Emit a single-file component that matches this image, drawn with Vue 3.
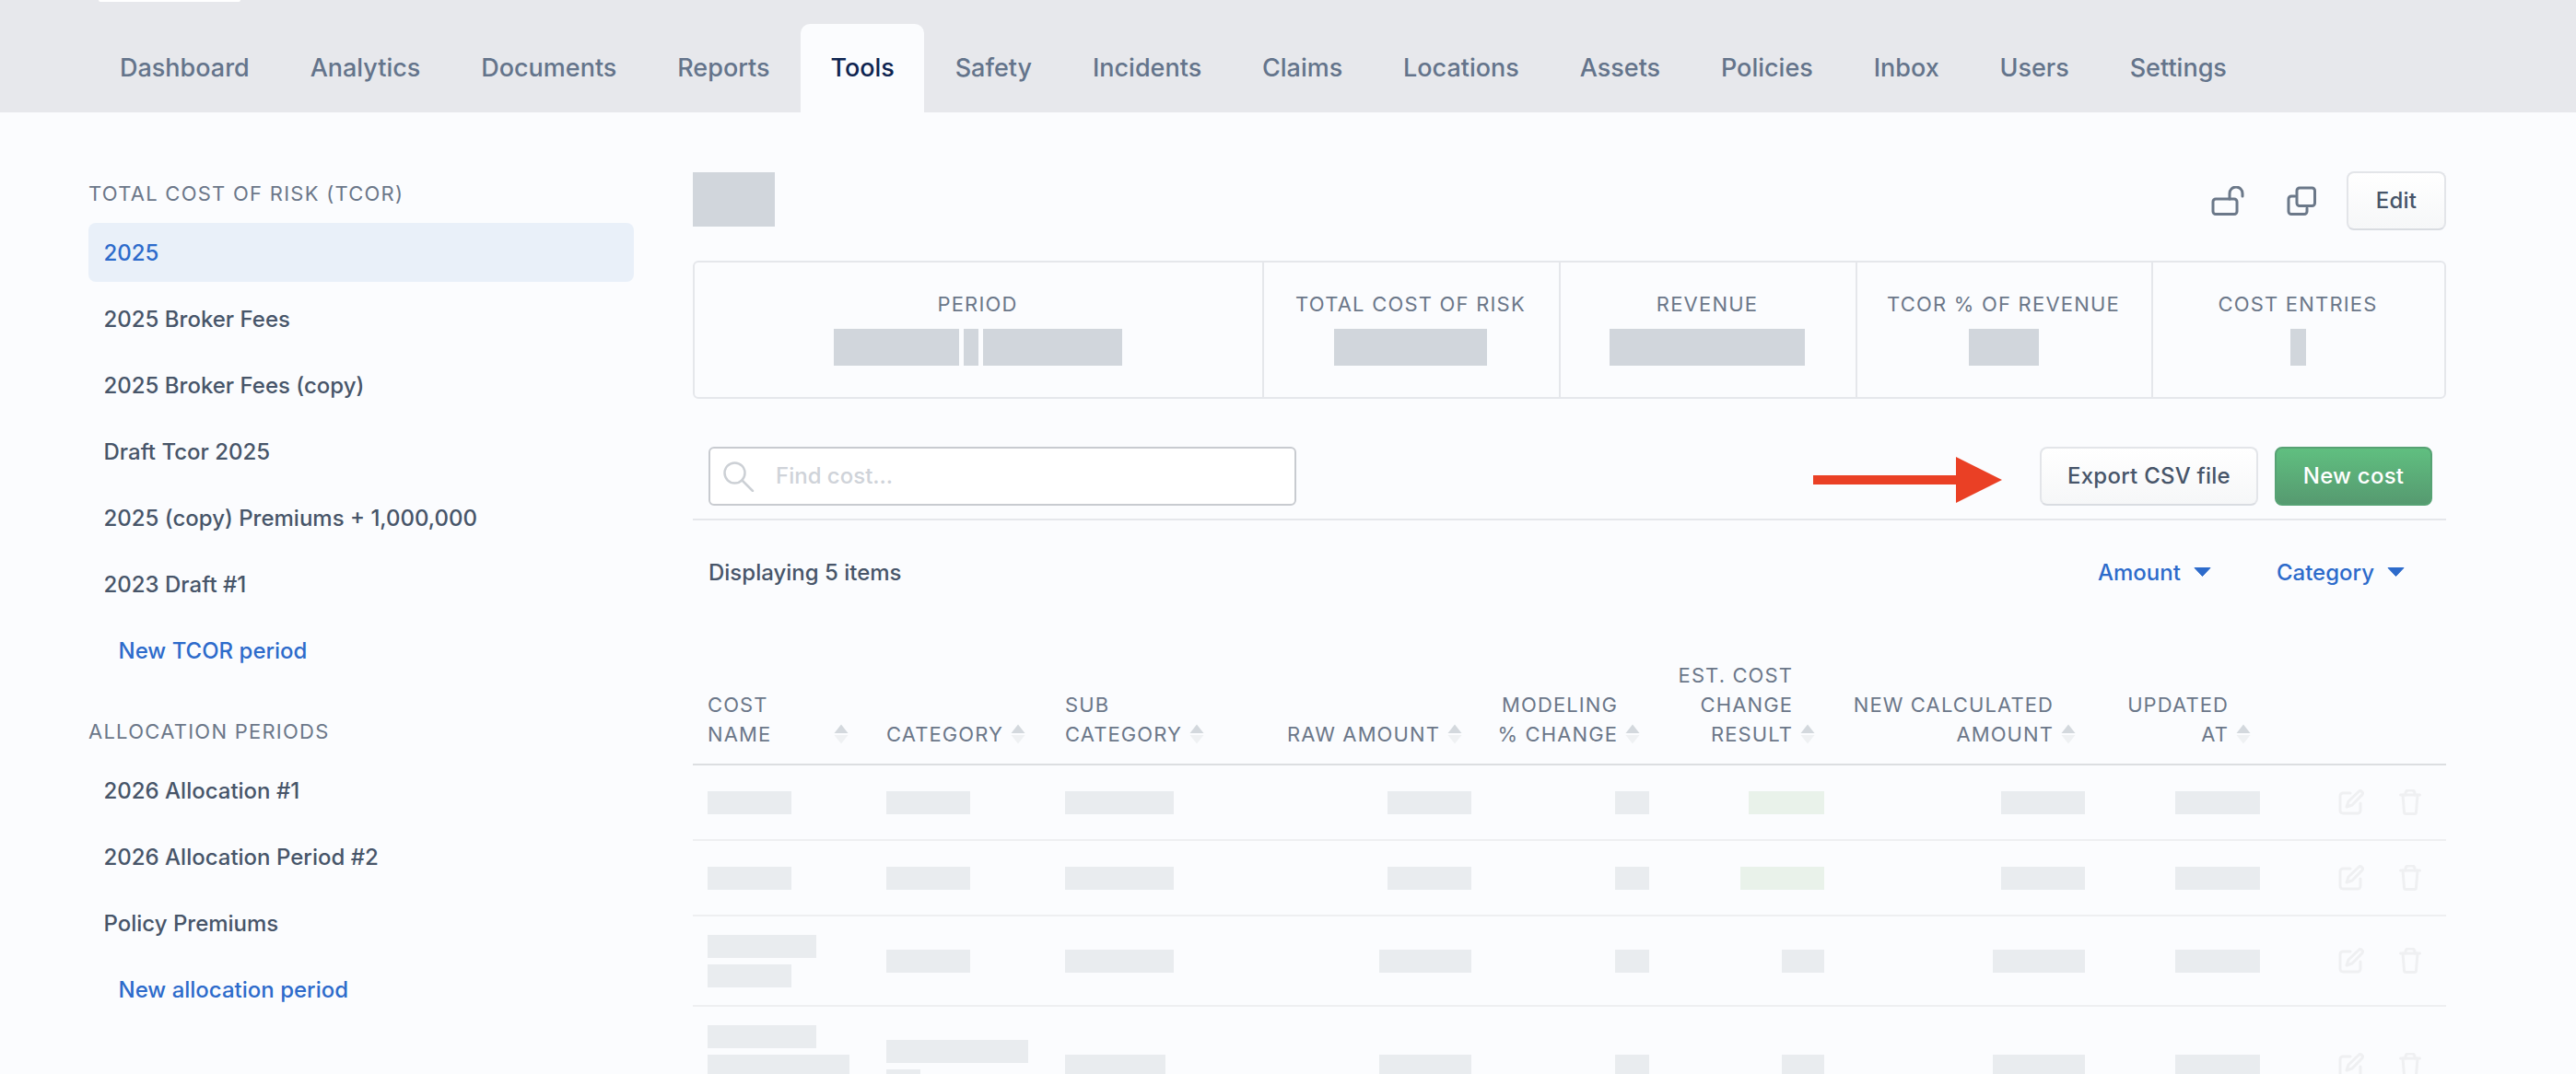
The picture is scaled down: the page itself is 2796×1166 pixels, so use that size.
<template>
  <div class="page">
    <header class="topbar">
      <div class="logo-stub"></div>
      <nav class="tabs">
        <a v-for="tab in tabs" :key="tab" class="tab" :class="{ active: tab === 'Tools' }">{{ tab }}</a>
      </nav>
    </header>

    <div class="content">
      <aside class="sidebar">
        <section v-for="group in groups" :key="group.title" class="side-group">
          <h3 class="side-title">{{ group.title }}</h3>
          <ul class="side-list">
            <li v-for="item in group.items" :key="item" class="side-item" :class="{ current: item === '2025' }">{{ item }}</li>
            <li class="side-item side-new">{{ group.action }}</li>
          </ul>
        </section>
      </aside>

      <main class="main">
        <div class="title-row">
          <span class="title-mask"></span>
          <div class="title-actions">
            <svg class="icon-lock" width="36" height="32" viewBox="0 0 36 32" fill="none" stroke="#6b7889" stroke-width="3">
              <rect x="2" y="14" width="26" height="16.5" rx="3" />
              <path d="M20 14V8a7 7 0 0 1 14 0v3" stroke-linecap="round" />
            </svg>
            <svg class="icon-copy" width="32" height="32" viewBox="0 0 32 32" fill="none" stroke="#6b7889" stroke-width="3">
              <rect x="11" y="2" width="19.5" height="19.5" rx="3" />
              <path d="M9 11H5a3 3 0 0 0-3 3v13.5a3 3 0 0 0 3 3h14a3 3 0 0 0 3-3V24" stroke-linecap="round" />
            </svg>
            <button class="btn btn-edit">Edit</button>
          </div>
        </div>

        <div class="summary">
          <div v-for="stat in stats" :key="stat.label" class="stat">
            <div class="stat-label">{{ stat.label }}</div>
            <div class="stat-value">
              <span v-for="(w, i) in stat.masks" :key="i" class="stat-mask" :style="{ width: w + 'px' }"></span>
            </div>
          </div>
        </div>

        <div class="toolbar">
          <div class="search">
            <svg width="34" height="33" viewBox="0 0 34 33" fill="none" stroke="#ccd0d5" stroke-width="2.5">
              <circle cx="12.5" cy="12.5" r="11" />
              <path d="M20.5 20.5L32 32" stroke-linecap="round" />
            </svg>
            <span class="search-ph">Find cost...</span>
          </div>
          <svg class="arrow" width="205" height="50" viewBox="0 0 205 50">
            <path d="M0 20H155V0L205 25L155 50V30H0z" fill="#ea4025" />
          </svg>
          <button class="btn btn-export">Export CSV file</button>
          <button class="btn btn-new">New cost</button>
        </div>

        <div class="filters">
          <span class="count">Displaying 5 items</span>
          <div class="filter-links">
            <a v-for="f in ['Amount', 'Category']" :key="f" class="filter">
              {{ f }}
              <svg width="19" height="10" viewBox="0 0 19 10"><path d="M1 0.5H18L9.5 9.5z" fill="#2d6bcb" stroke="#2d6bcb" stroke-linejoin="round" /></svg>
            </a>
          </div>
        </div>

        <table class="costs">
          <colgroup>
            <col v-for="w in colWidths" :key="w.id" :style="{ width: w.px + 'px' }" />
          </colgroup>
          <thead>
            <tr>
              <th v-for="col in columns" :key="col.id" :class="{ right: col.right }">
                <div class="th-inner">
                  <div class="th-text" :class="{ wide: col.id === 'name' }">
                    <div v-for="line in col.lines" :key="line">{{ line }}</div>
                  </div>
                  <svg class="sort" width="16" height="22" viewBox="0 0 16 22">
                    <path d="M8 0.5L15.5 10H0.5z" fill="#d3d8dd" />
                    <path d="M0.5 12H15.5L8 21.5z" fill="#eff1f3" />
                  </svg>
                </div>
              </th>
              <th></th>
            </tr>
          </thead>
          <tbody>
            <tr v-for="(row, r) in rows" :key="r">
              <td v-for="(cell, c) in row" :key="c" :class="{ right: c > 2 }">
                <div v-for="(w, i) in cell" :key="i" class="line">
                  <span class="mask" :class="{ green: c === 5 && r < 2 }" :style="{ width: w + 'px' }"></span>
                </div>
              </td>
              <td class="actions">
                <div class="action-icons">
                  <svg width="28" height="28" viewBox="0 0 28 28" fill="none" stroke="#eff0f2" stroke-width="3" stroke-linecap="round" stroke-linejoin="round">
                    <path d="M13 4H5a3 3 0 0 0-3 3v16a3 3 0 0 0 3 3h16a3 3 0 0 0 3-3V15" />
                    <path d="M9 19l2-6L22 2.5a2.5 2.5 0 0 1 3.6 3.6L15 17z" />
                  </svg>
                  <svg width="24" height="28" viewBox="0 0 24 28" fill="none" stroke="#eff0f2" stroke-width="3" stroke-linecap="round" stroke-linejoin="round">
                    <path d="M1.5 6h21" />
                    <path d="M7 6V4a3 3 0 0 1 3-3h4a3 3 0 0 1 3 3v2" />
                    <path d="M4 6l1.5 18.5a2 2 0 0 0 2 2h9a2 2 0 0 0 2-2L20 6" />
                  </svg>
                </div>
              </td>
            </tr>
          </tbody>
        </table>
      </main>
    </div>
  </div>
</template>

<script setup>
const tabs = ['Dashboard', 'Analytics', 'Documents', 'Reports', 'Tools', 'Safety', 'Incidents', 'Claims', 'Locations', 'Assets', 'Policies', 'Inbox', 'Users', 'Settings'];

const groups = [
  {
    title: 'Total cost of risk (TCOR)',
    items: ['2025', '2025 Broker Fees', '2025 Broker Fees (copy)', 'Draft Tcor 2025', '2025 (copy) Premiums + 1,000,000', '2023 Draft #1'],
    action: 'New TCOR period',
  },
  {
    title: 'Allocation periods',
    items: ['2026 Allocation #1', '2026 Allocation Period #2', 'Policy Premiums'],
    action: 'New allocation period',
  },
];

const stats = [
  { label: 'Period', masks: [136, 16, 151] },
  { label: 'Total cost of risk', masks: [166] },
  { label: 'Revenue', masks: [212] },
  { label: 'TCOR % of revenue', masks: [76] },
  { label: 'Cost entries', masks: [17] },
];

const colWidths = [194, 194, 183, 290, 193, 190, 283, 190, 186].map((px, id) => ({ id, px }));

const columns = [
  { id: 'name', lines: ['Cost', 'Name'] },
  { id: 'category', lines: ['Category'] },
  { id: 'sub', lines: ['Sub', 'Category'] },
  { id: 'raw', lines: ['Raw amount'], right: true },
  { id: 'modeling', lines: ['Modeling', '% change'], right: true },
  { id: 'est', lines: ['Est. cost', 'change', 'result'], right: true },
  { id: 'calc', lines: ['New calculated', 'amount'], right: true },
  { id: 'updated', lines: ['Updated', 'at'], right: true },
];

// widths of the blurred cell values
const rows = [
  [[91], [91], [118], [91], [37], [82], [91], [92]],
  [[91], [91], [118], [91], [37], [91], [91], [92]],
  [[118, 91], [91], [118], [100], [37], [46], [100], [92]],
  [[118, 154, 91], [154, 37], [109], [100], [37], [46], [100], [92]],
];
</script>

<style>
html,
body {
  margin: 0;
  height: 100%;
  overflow: hidden;
  background: #fbfcfe;
}
</style>

<style scoped>
.page {
  height: 100vh;
  overflow: hidden;
  background: #fbfcfe;
  font-family: Inter, "Liberation Sans", sans-serif;
  font-size: 24px;
  font-weight: 500;
  color: #475569;
}

.topbar {
  height: 122px;
  background: #e7e8ec;
}
.logo-stub {
  width: 154px;
  height: 2px;
  margin-left: 107px;
  background: #fff;
  border-radius: 0 0 4px 4px;
}
.tabs {
  display: flex;
  gap: 1.8px;
  margin-top: 24px;
  padding-left: 98px;
}
.tab {
  height: 96px;
  padding: 0 32px 1px;
  display: flex;
  align-items: center;
  box-sizing: border-box;
  color: #64748b;
  font-size: 27px;
  border-radius: 10px 10px 0 0;
}
.tab.active {
  background: #fbfcfe;
  color: #0e2450;
}

.content {
  display: flex;
  gap: 64px;
  padding-left: 96px;
}

.sidebar {
  width: 592px;
  flex: none;
  padding-top: 72px;
}
.side-group + .side-group {
  margin-top: 40px;
}
.side-title {
  margin: 0 0 16px;
  height: 32px;
  line-height: 32px;
  font-size: 22px;
  font-weight: 400;
  letter-spacing: 1.25px;
  text-transform: uppercase;
  color: #6b7789;
}
.side-list {
  list-style: none;
  margin: 0;
  padding: 0;
  display: flex;
  flex-direction: column;
  gap: 8px;
}
.side-item {
  height: 64px;
  line-height: 66px;
  padding-left: 16.5px;
  border-radius: 8px;
}
.side-item.current {
  background: #e9f0f9;
  color: #2d6bcb;
}
.side-new {
  padding-left: 32.5px;
  color: #2d6bcb;
}

.main {
  width: 1903px;
  flex: none;
  padding-top: 64px;
}

.title-row {
  display: flex;
  justify-content: space-between;
  align-items: flex-start;
}
.title-mask {
  width: 89px;
  height: 59px;
  margin-top: 1px;
  background: #d1d6dc;
}
.title-actions {
  display: flex;
  align-items: center;
}
.icon-copy {
  margin-left: 46px;
}
.btn {
  height: 64px;
  box-sizing: border-box;
  padding: 0 0 2px;
  font: inherit;
  border-radius: 8px;
  letter-spacing: 0.01em;
}
.btn-edit,
.btn-export {
  background: linear-gradient(#fff, #f6f7f8);
  border: 2px solid #e3e5e9;
  border-bottom-color: #d9dce1;
  color: #475569;
}
.btn-edit {
  width: 108px;
  margin-left: 33px;
}
.btn-export {
  width: 237px;
  margin-left: 41px;
}
.btn-new {
  width: 171px;
  margin-left: 18px;
  background: linear-gradient(#60bf80, #569a70);
  border: 2px solid #57a274;
  color: #fff;
}

.summary {
  display: grid;
  grid-template-columns: 616px 322px 322px 321px 1fr;
  height: 150px;
  box-sizing: border-box;
  margin-top: 33px;
  border: 2px solid #e5e7eb;
  border-radius: 6px;
}
.stat {
  display: flex;
  flex-direction: column;
  align-items: center;
  padding: 29px 2px 0 0;
}
.stat + .stat {
  border-left: 2px solid #e5e7eb;
}
.stat-label {
  line-height: 32px;
  font-size: 22px;
  font-weight: 400;
  letter-spacing: 1.2px;
  text-transform: uppercase;
  color: #6b7789;
}
.stat-value {
  display: flex;
  gap: 5px;
  margin-top: 11px;
}
.stat-mask {
  height: 40px;
  background: #d1d6dc;
}

.toolbar {
  display: flex;
  align-items: center;
  margin-top: 52px;
  padding: 0 15px 14px 17px;
  border-bottom: 2px solid #e5e7eb;
}
.search {
  width: 638px;
  height: 64px;
  box-sizing: border-box;
  display: flex;
  align-items: center;
  gap: 23px;
  padding-left: 14px;
  background: #fff;
  border: 2px solid #c8cbd0;
  border-radius: 6px;
}
.search-ph {
  color: #cfd3d9;
  margin-bottom: 2px;
}
.arrow {
  margin-left: auto;
  margin-top: 7px;
}

.filters {
  height: 114px;
  box-sizing: border-box;
  display: flex;
  justify-content: space-between;
  align-items: center;
  padding: 0 45px 2px 17px;
}
.filter-links {
  display: flex;
  gap: 71px;
}
.filter {
  display: flex;
  align-items: center;
  gap: 14px;
  color: #2d6bcb;
}

.costs {
  width: 1903px;
  margin-top: 22px;
  table-layout: fixed;
  border-collapse: separate;
  border-spacing: 0;
}
th {
  padding: 16px;
  vertical-align: bottom;
  border-bottom: 2px solid #dcdee1;
  font-size: 22px;
  font-weight: 400;
  line-height: 32px;
  letter-spacing: 1.1px;
  text-transform: uppercase;
  color: #6b7789;
  text-align: left;
}
th.right {
  padding-right: 26px;
  text-align: right;
}
.th-inner {
  display: flex;
  align-items: flex-end;
  gap: 8px;
  white-space: nowrap;
}
th.right .th-inner {
  justify-content: flex-end;
}
.th-text.wide {
  min-width: 129px;
}
.sort {
  flex: none;
  margin-bottom: 5px;
}
td {
  box-sizing: border-box;
  height: 82px;
  padding: 16px;
  vertical-align: middle;
  border-bottom: 2px solid #eeeff1;
}
td.right {
  text-align: right;
}
.line {
  height: 32px;
  display: flex;
  align-items: center;
}
td.right .line {
  justify-content: flex-end;
}
.mask {
  height: 25px;
  background: #e9ecef;
}
.mask.green {
  background: #e9f2ea;
}
.actions {
  padding: 0;
}
.action-icons {
  display: flex;
  justify-content: flex-end;
  gap: 38px;
  padding-right: 27px;
}
</style>
